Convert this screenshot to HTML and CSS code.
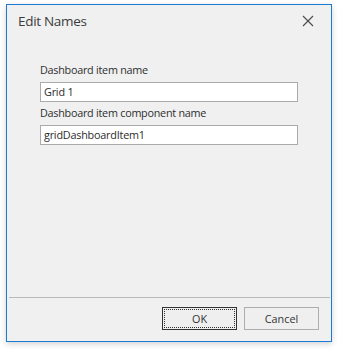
FILE: index.html
```html
<!DOCTYPE html>
<html>
<head>
<meta charset="utf-8">
<link rel="stylesheet" href="styles.css">
</head>
<body>
<div class="window">
  <div class="titlebar">
    <span class="title">Edit Names</span>
    <svg class="close" width="12" height="12" viewBox="0 0 12 12"><path d="M1 1 L11 11 M11 1 L1 11" stroke="#4a4a4a" stroke-width="1.1" fill="none"/></svg>
  </div>
  <div class="content">
    <label class="label">Dashboard item name</label>
    <div class="input">Grid 1</div>
    <label class="label second">Dashboard item component name</label>
    <div class="input">gridDashboardItem1</div>
  </div>
  <div class="separator"></div>
  <div class="footer">
    <div class="btn ok"><span class="focus">OK</span></div>
    <div class="btn">Cancel</div>
  </div>
</div>
</body>
</html>
```
FILE: styles.css
```css
html, body {
  margin: 0;
  padding: 0;
  background: #ffffff;
}
body {
  width: 338px;
  height: 350px;
  padding: 4px 0 0 6px;
  box-sizing: border-box;
  font-family: "Open Sans", "Noto Sans", sans-serif;
}
.window {
  width: 326px;
  height: 338px;
  box-sizing: border-box;
  border: 1px solid #1b7bd0;
  background: #f0f0f0;
  box-shadow: 0 2px 6px rgba(0,0,0,0.18);
  display: flex;
  flex-direction: column;
}
.titlebar {
  height: 31px;
  display: flex;
  align-items: center;
  justify-content: space-between;
  padding: 0 17px 0 11px;
}
.title {
  font-size: 13.5px;
  color: #3c3c3c;
  letter-spacing: -0.3px;
}
.close {
  display: block;
  margin-top: 1px;
}
.content {
  flex: 1;
  padding: 26px 0 0 33px;
  display: flex;
  flex-direction: column;
}
.label {
  font-size: 10.8px;
  color: #2e2e2e;
  height: 16px;
  line-height: 16px;
  margin-bottom: 4px;
  letter-spacing: -0.25px;
}
.label.second {
  margin-top: 3px;
}
.input {
  width: 258px;
  height: 20px;
  box-sizing: border-box;
  border: 1px solid #ababab;
  background: #fff;
  font-size: 10.8px;
  line-height: 18px;
  padding-left: 3px;
  color: #2b2b2b;
  letter-spacing: -0.2px;
}
.separator {
  height: 1px;
  background: #b9b9b9;
  margin: 0 1px 0 2px;
}
.footer {
  height: 43px;
  display: flex;
  justify-content: flex-end;
  align-items: flex-start;
  padding: 9px 12px 0 0;
  box-sizing: border-box;
  gap: 7px;
}
.btn {
  width: 75px;
  height: 23px;
  box-sizing: border-box;
  border: 1px solid #adadad;
  font-size: 10.8px;
  color: #333;
  display: flex;
  align-items: center;
  justify-content: center;
  background: #efefef;
}
.btn.ok {
  border-color: #333;
  padding: 1px;
}
.btn.ok .focus {
  flex: 1;
  align-self: stretch;
  border: 1px dotted #333;
  display: flex;
  align-items: center;
  justify-content: center;
}
```
